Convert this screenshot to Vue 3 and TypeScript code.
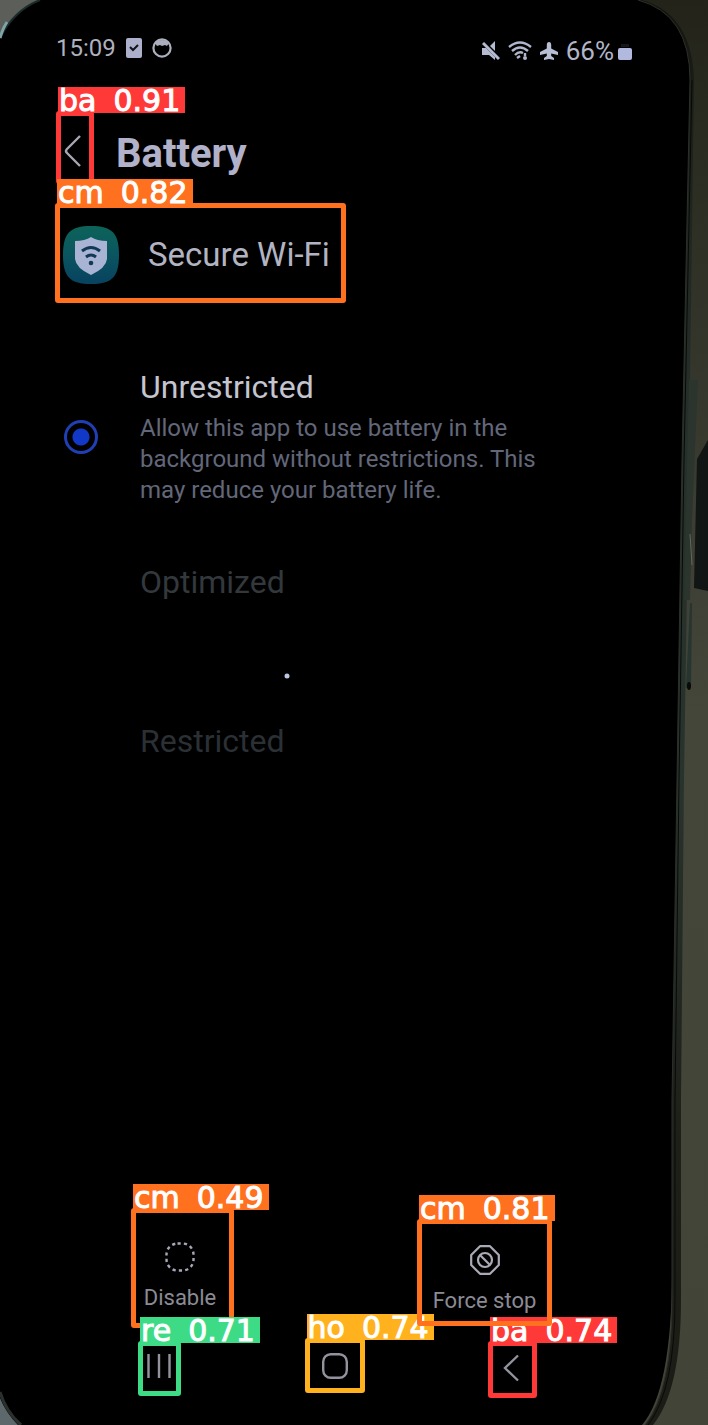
<script setup lang="ts">
import { ref } from 'vue'

interface Option {
  id: string
  title: string
  detail?: string
}

const options: Option[] = [
  {
    id: 'unrestricted',
    title: 'Unrestricted',
    detail: 'Allow this app to use battery in the background without restrictions. This may reduce your battery life.',
  },
  { id: 'optimized', title: 'Optimized' },
  { id: 'restricted', title: 'Restricted' },
]
const selected = ref('unrestricted')
</script>

<template>
  <main class="scene">
    <svg class="backdrop" viewBox="0 0 708 1425" preserveAspectRatio="none" aria-hidden="true">
      <defs>
        <linearGradient id="wall" x1="0" y1="0" x2="0" y2="1">
          <stop offset="0" stop-color="#23231a" />
          <stop offset="0.15" stop-color="#2d2f24" />
          <stop offset="0.3" stop-color="#37392f" />
          <stop offset="0.5" stop-color="#45463a" />
          <stop offset="1" stop-color="#424438" />
        </linearGradient>
        <linearGradient id="rim" x1="0" y1="0" x2="0" y2="1">
          <stop offset="0" stop-color="#14150e" />
          <stop offset="0.1" stop-color="#1e211b" />
          <stop offset="0.3" stop-color="#26302b" />
          <stop offset="0.55" stop-color="#29332d" />
          <stop offset="0.8" stop-color="#1e1f19" />
          <stop offset="1" stop-color="#1b1c15" />
        </linearGradient>
      </defs>
      <rect width="708" height="1425" fill="#000" />
      <path d="M0 0H40Q14 10 0 38Z" fill="#5b5e59" />
      <path d="M40 0Q14 10 0 38" fill="none" stroke="#1b2a2a" stroke-width="2" />
      <path d="M7 22Q3 28 0 38" fill="none" stroke="#7fa3a6" stroke-width="3" />
      <path d="M0 1398Q6 1413 18 1425H0Z" fill="#5c686c" />
      <path d="M0 1392Q6 1412 21 1425" fill="none" stroke="#2b302f" stroke-width="3" />
      <path d="M638 0Q692 14 692 80L684 460L678 780L672 1270Q672 1390 642 1425H708V0Z" fill="url(#wall)" />
      <path d="M638 0Q690 14 690 80L682 460L677 780L672 1100V1300Q672 1390 645 1425L653 1425Q681 1390 681 1300V1100L684 780L689 460L694 80Q692 14 642 0Z" fill="url(#rim)" />
      <path d="M638 0Q690 14 690 80L682 460L677 780L672 1100V1300Q672 1390 645 1425" fill="none" stroke="#2c302a" stroke-width="1" />
      <path d="M692 80L684 460L679 780L675 1100V1300Q675 1390 648 1425" fill="none" stroke="#080a08" stroke-width="1" />
      <path d="M689 380H698L692 520L690 600L684 600Z" fill="#2b352e" />
      <path d="M690 603H692L691 688H686Z" fill="#26352f" />
      <path d="M708 440L697 459L694 588L708 591Z" fill="#111513" />
      <path d="M690 534L692 565" stroke="#62685b" stroke-width="1" />
      <ellipse cx="689" cy="686" rx="2" ry="4" fill="#080b09" />
      <circle cx="287" cy="676" r="2.5" fill="#b9c8e4" />
    </svg>

    <header class="status">
      <div class="status-left">
        <span>15:09</span>
        <svg width="16" height="20" viewBox="0 0 16 20" aria-hidden="true">
          <rect width="16" height="20" rx="2" fill="#acb0ca" />
          <path d="M4 9l3 3 5-5" fill="none" stroke="#11131b" stroke-width="2" />
        </svg>
        <svg width="20" height="20" viewBox="0 0 20 20" aria-hidden="true">
          <circle cx="10" cy="10" r="8.6" fill="none" stroke="#acafbd" stroke-width="2.2" />
          <path d="M3 5Q10-1 17 5L15 8 13 7 10 8 8 7 5 8Z" fill="#acafbd" />
        </svg>
      </div>
      <div class="status-right">
        <svg width="18" height="20" viewBox="0 0 18 20" fill="#b4bbd2" aria-hidden="true">
          <path d="M0 7H4L13 16V19L7 14H0Z" />
          <path d="M8 5L13 0V10Z" />
          <path d="M1 2L17 18" stroke="#b4bbd2" stroke-width="3" />
        </svg>
        <svg width="24" height="20" viewBox="0 0 24 20" fill="none" stroke="#b0b6cc" stroke-width="2.4" aria-hidden="true">
          <path d="M1 6Q12-3 23 6" />
          <path d="M4 10Q12 3 20 10" />
          <path d="M7 14Q11 10 15 12" />
          <path d="M9 17L12 15" />
          <path d="M17 12V15" />
          <circle cx="17" cy="17" r="2" fill="#b0b6cc" stroke="none" />
        </svg>
        <svg width="18" height="18" viewBox="0 0 18 18" fill="#b8bfd4" aria-hidden="true">
          <path d="M9 0Q11.200 0 11.200 3V6.500L18 10V13L11.200 11.500V14L14 16V18L9 17 4 18V16L6.800 14V11.500L0 13V10L6.800 6.500V3Q6.800 0 9 0Z" />
        </svg>
        <span class="level">66%<svg width="14" height="18" viewBox="0 0 14 18" aria-hidden="true">
          <path d="M3 2H11V5H3Z" fill="#15161c" />
          <rect y="6" width="14" height="12" rx="2" fill="#b2b9df" />
        </svg></span>
      </div>
    </header>

    <section class="heading">
      <button class="back hit red" type="button" aria-label="Back">
        <svg width="18" height="34" viewBox="0 0 18 34" aria-hidden="true">
          <path d="M16 2L3 15Q1 17 3 19L16 32" />
        </svg>
        <span class="tag"><span>ba</span> <span>0.91</span></span>
      </button>
      <h1>Battery</h1>
    </section>

    <section class="app hit orange">
      <svg width="56" height="58" viewBox="0 0 56 58" aria-hidden="true">
        <defs>
          <linearGradient id="teal" x1="0" y1="0" x2="0" y2="1">
            <stop offset="0" stop-color="#0d6359" />
            <stop offset="0.5" stop-color="#0a5560" />
            <stop offset="1" stop-color="#084260" />
          </linearGradient>
        </defs>
        <path d="M28 0C49 0 56 7 56 29S49 58 28 58 0 51 0 29 7 0 28 0Z" fill="url(#teal)" />
        <path d="M28 11Q34 15 44 15V33Q43 42 28 49Q13 42 12 33V15Q22 15 28 11Z" fill="#a9b3d3" />
        <path d="M19 25Q28 18 37 25M23 31Q28 27 33 31" fill="none" stroke="#113957" stroke-width="3" />
        <circle cx="28" cy="37" r="2.3" fill="#113957" />
      </svg>
      <span>Secure Wi-Fi</span>
      <span class="tag"><span>cm</span> <span>0.82</span></span>
    </section>

    <section class="options" role="radiogroup" aria-label="Battery usage">
      <label v-for="option in options" :key="option.id" class="option" :class="option.id">
        <input v-model="selected" type="radio" name="usage" :value="option.id" />
        <span class="copy">
          <span class="name">{{ option.title }}</span>
          <span v-if="option.detail" class="detail">{{ option.detail }}</span>
        </span>
      </label>
    </section>

    <section class="actions">
      <button class="action disable hit orange" type="button">
        <svg width="30" height="30" viewBox="0 0 30 30" aria-hidden="true">
          <rect x="1.5" y="1.5" width="27" height="27" rx="11" fill="none" stroke="#a9a7b7" stroke-width="2.4" stroke-dasharray="3.2 3.200" />
        </svg>
        <span>Disable</span>
        <span class="tag"><span>cm</span> <span>0.49</span></span>
      </button>
      <button class="action stop hit orange" type="button">
        <svg width="30" height="30" viewBox="0 0 30 30" fill="none" stroke="#a9aab5" stroke-width="2.2" aria-hidden="true">
          <path d="M10 1.2H20L28.8 10V20L20 28.8H10L1.2 20V10Z" stroke-linejoin="round" />
          <circle cx="15" cy="15" r="7" />
          <path d="M10 10L20 20" />
        </svg>
        <span>Force stop</span>
        <span class="tag"><span>cm</span> <span>0.81</span></span>
      </button>
    </section>

    <nav class="nav" aria-label="System">
      <button class="recent hit green" type="button" aria-label="Recents">
        <svg width="26" height="26" viewBox="0 0 26 26" aria-hidden="true"><path d="M2.500 1V25M13 1V25M23.500 1V25" /></svg>
        <span class="tag"><span>re</span> <span>0.71</span></span>
      </button>
      <button class="home hit amber" type="button" aria-label="Home">
        <svg width="26" height="26" viewBox="0 0 26 26" aria-hidden="true"><rect x="1.2" y="1.2" width="23.6" height="23.6" rx="7.5" /></svg>
        <span class="tag"><span>ho</span> <span>0.74</span></span>
      </button>
      <button class="return hit red" type="button" aria-label="Back">
        <svg width="16" height="28" viewBox="0 0 16 28" aria-hidden="true"><path d="M15 1.500L2 14L15 26.500" /></svg>
        <span class="tag"><span>ba</span> <span>0.74</span></span>
      </button>
    </nav>
  </main>
</template>

<style>
body {
  margin: 0;
  background: #000;
}
</style>

<style scoped>
.scene {
  position: relative;
  display: flex;
  flex-direction: column;
  box-sizing: border-box;
  min-height: 100vh;
  padding: 34px 0 27px;
  font-family: Roboto, "Liberation Sans", sans-serif;
  color: #acadbb;
  isolation: isolate;
  overflow: hidden;
}
.backdrop {
  position: absolute;
  inset: 0;
  z-index: -1;
  width: 100%;
  height: 100%;
}
svg {
  display: block;
  flex: none;
}
button {
  padding: 0;
  border: 0;
  background: none;
  color: inherit;
  font: inherit;
}
.status {
  display: flex;
  justify-content: space-between;
  height: 34px;
  padding: 0 76px 0 56px;
}
.status-left,
.status-right {
  display: flex;
  align-items: center;
}
.status-left {
  gap: 10px;
  height: 28px;
  font-size: 24px;
  color: #aeb1be;
}
.status-right {
  gap: 8px;
  font-size: 26px;
  color: #b1b6c8;
}
.level {
  display: flex;
  align-items: center;
  gap: 4px;
}

.hit {
  position: relative;
}
.hit::after {
  content: "";
  position: absolute;
  inset: 0;
  border: 5px solid var(--mark);
  border-radius: 3px;
}
.tag {
  position: absolute;
  left: 2px;
  bottom: calc(100% - 2px);
  z-index: 1;
  display: flex;
  gap: 17px;
  height: 26px;
  padding: 0 5px 0 1px;
  background: var(--mark);
  color: #fff;
  font: 30px/28px "DejaVu Sans", sans-serif;
  -webkit-text-stroke: 1px #fff;
  white-space: nowrap;
}
.red { --mark: #ff3838; }
.orange { --mark: #ff701f; }
.green { --mark: #3ddb86; }
.amber { --mark: #ffb21d; }

.heading {
  display: flex;
  align-items: center;
  gap: 22px;
  margin-top: 43px;
  padding-left: 56px;
}
.back {
  display: flex;
  align-items: center;
  box-sizing: border-box;
  width: 38px;
  height: 73px;
  padding: 6px 0 0 8px;
}
.back path,
.nav svg {
  fill: none;
  stroke: #a6a7b2;
  stroke-width: 2.4;
}
.nav svg {
  stroke: #92939d;
}
h1 {
  margin: 0;
  padding-top: 12px;
  font-size: 40px;
  line-height: 48px;
  font-weight: 700;
  color: #b1b2ca;
}
.app {
  display: flex;
  align-items: center;
  gap: 29px;
  align-self: flex-start;
  box-sizing: border-box;
  height: 100px;
  margin: 19px 0 0 55px;
  padding: 3px 16px 0 8px;
  font-size: 33px;
  line-height: 40px;
  color: #b3b4c2;
}

.options {
  display: flex;
  flex-direction: column;
  gap: 56px;
  margin-top: 64px;
  padding: 0 160px 0 64px;
}
.option {
  display: flex;
  align-items: center;
  gap: 42px;
  min-height: 103px;
}
.option:not(.unrestricted) {
  align-items: flex-start;
  color: #33383d;
}
.option.restricted {
  color: #2b3035;
}
input {
  flex: none;
  box-sizing: border-box;
  width: 34px;
  height: 34px;
  margin: 0;
  appearance: none;
  border-radius: 50%;
}
input:checked {
  border: 3px solid #203fb5;
  background: radial-gradient(circle, #1238c8 0 8px, transparent 9px);
}
.copy,
.name,
.detail {
  display: block;
}
.name {
  font-size: 32px;
  line-height: 40px;
}
.unrestricted .name {
  color: #c4c5cf;
}
.detail {
  padding-top: 6px;
  font-size: 24px;
  line-height: 31px;
  color: #626779;
}

.actions {
  display: flex;
  align-items: flex-end;
  justify-content: space-between;
  margin-top: auto;
  padding: 0 156px 0 131px;
  font-size: 22px;
  line-height: 26px;
  color: #8b8b95;
}
.action {
  display: flex;
  flex-direction: column;
  align-items: center;
  gap: 13px;
  box-sizing: border-box;
}
.disable {
  width: 103px;
  height: 120px;
  padding: 34px 5px 0 0;
}
.stop {
  z-index: 3;
  width: 135px;
  height: 107px;
  margin-bottom: 2px;
  padding-top: 26px;
}
.nav {
  display: flex;
  align-items: center;
  justify-content: space-between;
  height: 60px;
  margin-top: 10px;
  padding: 0 171px 0 138px;
}
.nav button {
  display: flex;
  align-items: center;
  justify-content: center;
  box-sizing: border-box;
  z-index: 2;
}
.nav .recent {
  width: 43px;
  height: 55px;
  padding: 0 2px 4px 0;
}
.nav .home {
  align-self: flex-start;
  width: 60px;
  height: 55px;
}
.nav .return {
  align-self: flex-end;
  width: 49px;
  height: 57px;
  padding: 0 4px 4px 0;
}
</style>
